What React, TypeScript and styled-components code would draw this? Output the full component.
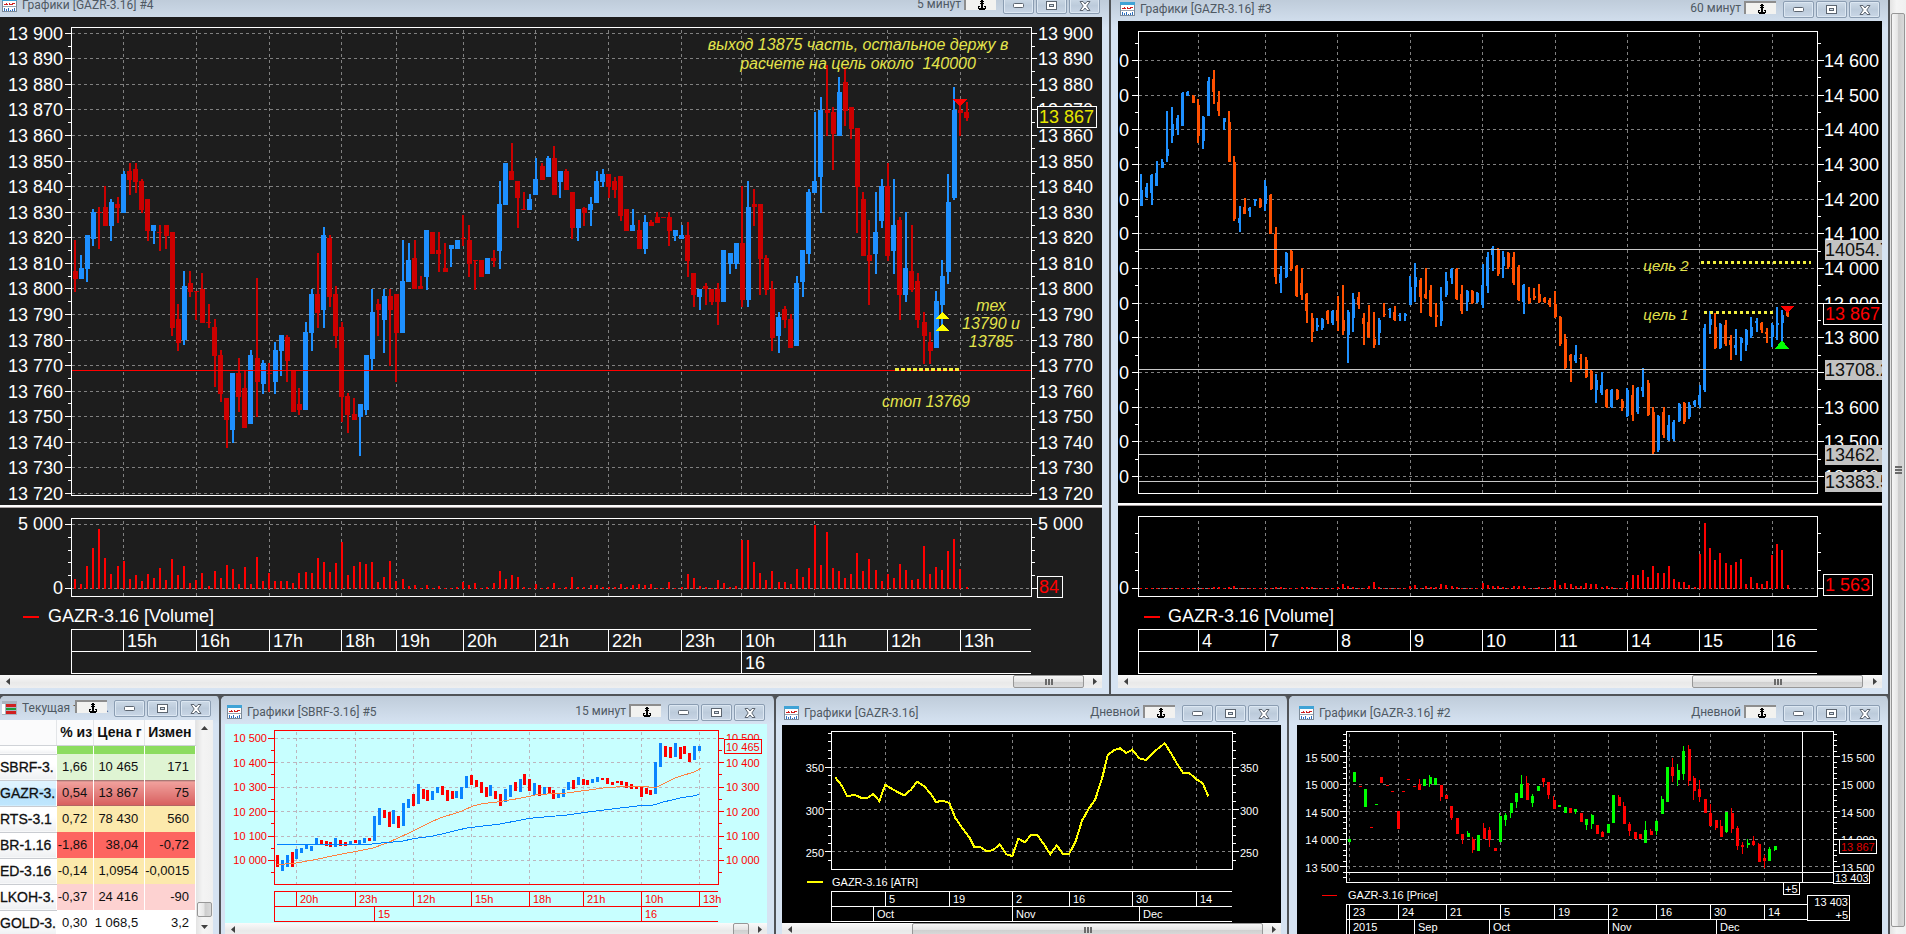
import React, { useLayoutEffect, useRef, useState } from 'react';
import styled, { createGlobalStyle, css } from 'styled-components';

const GlobalStyle = createGlobalStyle`
  *, *::before, *::after { box-sizing: border-box; }
  html, body, #root { height: 100%; }
  body { margin: 0; overflow: hidden; background: #45484c; font-family: 'Liberation Sans', Arial, sans-serif; }
  button { font: inherit; margin: 0; padding: 0; }
`;

const FRAME = '#d6e3f2';
const EDGE = '#505357';

/* ---------- desktop and windows ---------- */

const Desktop = styled.main`
  display: flex;
  height: 100vh;
  overflow: hidden;
`;

const WindowRows = styled.div`
  flex: 1;
  min-width: 0;
  display: flex;
  flex-direction: column;
`;

const WindowRow = styled.div<{ $columns: string; $grow?: boolean }>`
  display: grid;
  grid-template-columns: ${(p) => p.$columns};
  ${(p) => p.$grow && css`flex: 1; min-height: 0;`}
  background: ${EDGE};
`;

const Frame = styled.section<{ $left: number; $right: number; $last?: boolean }>`
  display: flex;
  flex-direction: column;
  min-width: 0;
  overflow: hidden;
  background: ${FRAME};
  padding: 0 ${(p) => p.$right}px ${(p) => (p.$last ? 0 : 6)}px ${(p) => p.$left}px;
  border-right: 2px solid ${EDGE};
  border-bottom: ${(p) => (p.$last ? 0 : 2)}px solid ${EDGE};
  border-radius: ${(p) => (p.$last ? '5px 5px 0 0' : '0')};
  background-image: linear-gradient(#bfccda 0, ${FRAME} 28px);
`;

const TitleBar = styled.header<{ $height: number }>`
  flex: none;
  height: ${(p) => p.$height}px;
  display: flex;
  align-items: flex-end;
  gap: 2px;
  padding: 0 2px 3px 2px;
  color: #4f5963;
  font-family: Roboto, 'Open Sans', sans-serif;
  font-size: 12px;
  line-height: 17px;
  white-space: nowrap;
`;

const TitleIcon = styled.svg`
  flex: none;
  width: 15px;
  height: 14px;
  margin: 0 3px 2px 0;
`;

const TitleText = styled.h2`
  flex: 1;
  min-width: 0;
  margin: 0;
  font: inherit;
  overflow: hidden;
`;

const Period = styled.span`
  padding-bottom: 1px;
`;

const AnchorButton = styled.button<{ $overlap?: boolean }>`
  flex: none;
  width: 32px;
  height: 13px;
  margin: 0 5px 4px ${(p) => (p.$overlap ? -36 : 1)}px;
  z-index: 1;
  display: flex;
  justify-content: center;
  align-items: center;
  border: 0;
  border-top: 2px solid #8d8d8d;
  border-left: 2px solid #8d8d8d;
  background: #f2f2f0;
`;

const CaptionButton = styled.button`
  flex: none;
  width: 31px;
  height: 17px;
  display: flex;
  justify-content: center;
  align-items: center;
  border: 1px solid #8b9db2;
  border-radius: 2px;
  background: linear-gradient(#cddae7, #bccbdb 50%, #c9d6e6);
  box-shadow: inset 0 0 0 1px #dce7f2;
`;

const Client = styled.div`
  flex: none;
  min-width: 0;
  overflow: hidden;
`;

function ChartIcon() {
  return (
    <TitleIcon viewBox="0 0 15 14" shapeRendering="crispEdges" aria-hidden="true">
      <rect width="15" height="14" fill="#7c8a98" />
      <rect x="1" y="3" width="13" height="10" fill="#fff" />
      <rect width="15" height="3" fill="#3fa3d6" />
      <path d="M2 6h2v-1h1v1h2v-1h1v1h2v-1h3v1h-2v1h-4v-1h-1v1h-4z" fill="#d02020" />
      <rect x="1" y="8" width="13" height="1" fill="#9aa5b0" />
      <path d="M2 10h1v3h-1zM4 11h1v2h-1zM6 10h1v3h-1zM8 12h1v1h-1zM10 11h1v2h-1zM12 10h1v3h-1z" fill="#2d6fc0" />
    </TitleIcon>
  );
}

function TableIcon() {
  return (
    <TitleIcon viewBox="0 0 15 14" shapeRendering="crispEdges" aria-hidden="true">
      <rect width="15" height="14" fill="#a9b4bf" />
      <rect y="3" width="3" height="10" fill="#fff" />
      <rect x="4" y="3" width="10" height="3" fill="#d02020" />
      <rect x="4" y="7" width="10" height="2" fill="#1f9a3a" />
      <rect x="4" y="10" width="10" height="3" fill="#d02020" />
    </TitleIcon>
  );
}

function AnchorGlyph() {
  return (
    <svg width="9" height="10" viewBox="0 0 9 10" aria-hidden="true" shapeRendering="crispEdges">
      <path d="M4 0h2v1h1v1h-1v1h1v1h-1v4h2v-1h-1v-1h2v3h-1v1h-6v-1h-1v-3h2v1h-1v1h2v-4h-1v-1h1v-1h-1v-1h1z" fill="#000" />
    </svg>
  );
}

function Captions() {
  return (
    <>
      <CaptionButton aria-label="Свернуть">
        <svg width="11" height="5" viewBox="0 0 11 5"><rect x="0.5" y="0.5" width="10" height="4" rx="1" fill="#fff" stroke="#5c6570" /></svg>
      </CaptionButton>
      <CaptionButton aria-label="Развернуть">
        <svg width="11" height="9" viewBox="0 0 11 9" shapeRendering="crispEdges">
          <rect x="0.5" y="0.5" width="10" height="8" fill="#fff" stroke="#5c6570" />
          <rect x="3.5" y="3.5" width="4" height="2" fill="#d5dfea" stroke="#5c6570" />
        </svg>
      </CaptionButton>
      <CaptionButton aria-label="Закрыть">
        <svg width="12" height="10" viewBox="0 0 12 10">
          <path d="M1 .5h3l2 2.500 2-2.500h3L7.800 5 11 9.500H8L6 7 4 9.500H1L4.200 5z" fill="#fff" stroke="#5c6570" />
        </svg>
      </CaptionButton>
    </>
  );
}

interface WinProps {
  title: string;
  period?: string;
  titleHeight: number;
  left: number;
  right: number;
  last?: boolean;
  table?: boolean;
  children: React.ReactNode;
}

function Win({ title, period, titleHeight, left, right, last, table, children }: WinProps) {
  return (
    <Frame $left={left} $right={right} $last={last}>
      <TitleBar $height={titleHeight}>
        {table ? <TableIcon /> : <ChartIcon />}
        <TitleText>{title}</TitleText>
        {period && <Period>{period}</Period>}
        <AnchorButton $overlap={table} aria-label="Закрепить"><AnchorGlyph /></AnchorButton>
        <Captions />
      </TitleBar>
      {children}
    </Frame>
  );
}

/* ---------- scroll bars ---------- */

const HBar = styled.div`
  flex: none;
  height: 13px;
  display: flex;
  align-items: center;
  background: linear-gradient(#fafafa, #e9e9e9 60%, #efefef);
`;

const HTrack = styled.div<{ $before: number; $thumb: number; $after: number }>`
  flex: 1;
  height: 100%;
  display: grid;
  grid-template-columns: ${(p) => `${p.$before}fr ${p.$thumb}fr ${p.$after}fr`};
`;

const HThumb = styled.div`
  grid-column: 2;
  min-width: 0;
  display: flex;
  justify-content: center;
  align-items: center;
  gap: 1px;
  overflow: hidden;
  border: 1px solid #979797;
  border-radius: 2px;
  background: linear-gradient(#f6f6f6, #e4e4e4 50%, #cfcfcf 52%, #dadada);
`;

const Grip = styled.i<{ $vertical?: boolean }>`
  flex: none;
  width: ${(p) => (p.$vertical ? 7 : 2)}px;
  height: ${(p) => (p.$vertical ? 2 : 6)}px;
  background: #6b6b6b;
`;

const ArrowButton = styled.button<{ $w: number; $h: number }>`
  flex: none;
  width: ${(p) => p.$w}px;
  height: ${(p) => p.$h}px;
  display: flex;
  align-items: center;
  justify-content: center;
  border: 0;
  background: transparent;
`;

function Arrow({ d, label, w, h }: { d: string; label: string; w: number; h: number }) {
  return (
    <ArrowButton $w={w} $h={h} aria-label={label}>
      <svg width="7" height="7" viewBox="0 0 7 7"><path d={d} fill="#404040" /></svg>
    </ArrowButton>
  );
}

const LEFT = 'M5 0v7L1 3.500z';
const RIGHT = 'M2 0v7l4-3.500z';
const UP = 'M0 5h7L3.500 1z';
const DOWN = 'M0 2h7L3.500 6z';

function HScroll({ before, thumb, after, grip = true }: { before: number; thumb: number; after: number; grip?: boolean }) {
  return (
    <HBar>
      <Arrow d={LEFT} label="Влево" w={16} h={13} />
      <HTrack $before={before} $thumb={thumb} $after={after}>
        <HThumb>{grip && <><Grip /><Grip /><Grip /></>}</HThumb>
      </HTrack>
      <Arrow d={RIGHT} label="Вправо" w={16} h={13} />
    </HBar>
  );
}

const VBar = styled.div<{ $width: number }>`
  flex: none;
  width: ${(p) => p.$width}px;
  display: flex;
  flex-direction: column;
  align-items: stretch;
  background: linear-gradient(90deg, #e3e3e3, #f4f4f4 40%, #f0f0f0);
`;

const VThumb = styled.div<{ $grow?: boolean }>`
  ${(p) => (p.$grow ? 'flex: 1;' : 'height: 15px;')}
  margin: 0 1px;
  display: flex;
  flex-direction: column;
  align-items: center;
  justify-content: center;
  gap: 1px;
  border: 1px solid #979797;
  border-radius: 2px;
  background: linear-gradient(90deg, #f6f6f6, #e6e6e6 45%, #cdcdcd 55%, #d9d9d9);
`;

const Spacer = styled.div<{ $h?: number }>`
  ${(p) => (p.$h ? `flex: none; height: ${p.$h}px;` : 'flex: 1;')}
`;

/* ---------- charts ---------- */

const Svg = styled.svg`
  display: block;
  shape-rendering: crispEdges;
`;

const SvgText = styled.text<{ $size: number; $italic?: boolean }>`
  font-family: 'Liberation Sans', Arial, sans-serif;
  font-size: ${(p) => p.$size}px;
  font-style: ${(p) => (p.$italic ? 'italic' : 'normal')};
  white-space: pre;
`;

interface TextProps {
  x: number;
  y: number;
  size: number;
  fill: string;
  end?: boolean;
  middle?: boolean;
  italic?: boolean;
  children: React.ReactNode;
}

/* y is the middle of the digits */
function T({ x, y, size, fill, end, middle, italic, children }: TextProps) {
  return (
    <SvgText
      x={Math.round(x)}
      y={Math.round(y + size * 0.36)}
      fill={fill}
      textAnchor={end ? 'end' : middle ? 'middle' : 'start'}
      $size={size}
      $italic={italic}
    >
      {children}
    </SvgText>
  );
}

interface H { x1: number; x2: number; y: number; color: string; dash?: string; w?: number }
function HL({ x1, x2, y, color, dash, w = 1 }: H) {
  const yy = Math.floor(y) + (w % 2 ? 0.5 : 0);
  return <line x1={x1} x2={x2} y1={yy} y2={yy} stroke={color} strokeWidth={w} strokeDasharray={dash} />;
}
interface V { x: number; y1: number; y2: number; color: string; dash?: string }
function VL({ x, y1, y2, color, dash }: V) {
  const xx = Math.floor(x) + 0.5;
  return <line x1={xx} x2={xx} y1={y1} y2={y2} stroke={color} strokeDasharray={dash} />;
}

function Box({ x1, x2, y1, y2, color, fill = 'none' }: { x1: number; x2: number; y1: number; y2: number; color: string; fill?: string }) {
  const a = Math.floor(x1);
  const b = Math.floor(y1);
  return <rect x={a + 0.5} y={b + 0.5} width={Math.floor(x2) - a} height={Math.floor(y2) - b} stroke={color} fill={fill} />;
}

type Fx = (x: number) => number;

interface CanvasProps {
  x: number;
  y: number;
  width: number;
  height: number;
  plot: [number, number];
  bg: string;
  label: string;
  children: (fx: Fx) => React.ReactNode;
}

/* The axes keep their width; only the plot stretches with the window. */
function Canvas({ x, y, width, height, plot, bg, label, children }: CanvasProps) {
  const ref = useRef<HTMLDivElement>(null);
  const [w, setW] = useState(width);
  useLayoutEffect(() => {
    const el = ref.current;
    if (!el) return;
    const read = () => setW(Math.max(200, el.clientWidth));
    read();
    const ro = new ResizeObserver(read);
    ro.observe(el);
    return () => ro.disconnect();
  }, []);
  const [l, r] = plot;
  const extra = w - width;
  const fx: Fx = (v) => (v <= l ? v : v >= r ? v + extra : l + ((v - l) * (r - l + extra)) / (r - l));
  return (
    <Client ref={ref}>
      <Svg width={w} height={height} viewBox={`${x} ${y} ${w} ${height}`} role="img" aria-label={label}>
        <rect x={x} y={y} width={w} height={height} fill={bg} />
        {children(fx)}
      </Svg>
    </Client>
  );
}

/* Bars are stored as colour + high, open/close top, bottom, low in thirds of a pixel. */
type Bar = { c: string; v: number[] };
const parse = (s: string): Bar[] =>
  s.trim().split(/\s+/).map((t) => {
    const n = t.slice(1).split(',').map(Number);
    return { c: t[0], v: n.length === 2 ? [n[0], n[0], n[1], n[1]] : n };
  });

interface BarsProps {
  data: Bar[];
  fx: Fx;
  start: number;
  step: number;
  base?: number;
  colors: Record<string, string>;
  wick: number;
  body: number;
}
function Bars({ data, fx, start, step, base = 0, colors, wick, body }: BarsProps) {
  return (
    <>
      {data.map(({ c, v: [h, t, b, l] }, i) => {
        const cx = fx(start + step * i);
        const y = (n: number) => Math.round(base + n / 3);
        return (
          <g key={i} fill={colors[c]}>
            {l > h && (h < t || l > b) && <rect x={Math.round(cx - 1)} y={y(h)} width={wick} height={Math.max(1, y(l) - y(h))} />}
            <rect x={Math.round(cx - body / 2)} y={y(t)} width={body} height={Math.max(1, y(b) - y(t))} />
          </g>
        );
      })}
    </>
  );
}

function Volume({ tops, fx, start, step }: { tops: number[]; fx: Fx; start: number; step: number }) {
  return (
    <g fill="#ff0000">
      {tops.map((t, i) => {
        const y = Math.round(490 + t / 3);
        return <rect key={i} x={Math.round(fx(start + step * i) - 1)} y={y} width="2" height={589 - y} />;
      })}
    </g>
  );
}

const GAZR5 = parse(`
r720,813,836,876 b765,804,836,836 b705,705,807,845 b627,636,716,738 r622,636,640,746 r558,622,677,677 b598,606,678,722 r591,612,624,668
b514,522,638,638 r489,514,540,584 r489,507,545,578 r537,543,629,638 r598,598,692,722 b675,675,692,731 r675,697,700,752 r676,676,707,746
r697,697,983,1007 r912,957,1028,1052 b813,858,1021,1036 r813,849,876,890 r873,873,876,960 r819,867,968,968 r912,966,969,983 r958,981,1067,1160
r1050,1065,1181,1205 r1194,1194,1259,1343 b1119,1119,1289,1328 r1074,1119,1190,1235 r1113,1164,1283,1283 b1050,1065,1273,1273 r833,1074,1145,1250
b1080,1089,1151,1181 r1089,1119,1123,1175 b1027,1050,1145,1181 b1005,1005,1052,1127 r1005,1012,1083,1145 r1112,1112,1235,1235 r1164,1212,1229,1244
b966,996,1229,1229 b867,882,998,1052 r759,882,938,983 b681,705,929,983 r705,714,890,920 r858,882,1007,1043 r966,981,1190,1266 r1180,1188,1244,1298
r1194,1242,1259,1259 b1212,1212,1250,1367 b1065,1065,1229,1244 b867,936,1076,1112 r897,912,929,1007 b867,888,960,1058 r867,888,929,1097
r882,882,998,1145 b720,843,998,998 b730,780,845,845 r720,774,867,867 r828,858,867,867 b690,690,831,870 r697,697,762,762 r697,750,762,815
r730,804,816,816 b735,735,747,801 b720,720,747,747 r645,714,717,738 r675,720,792,831 r780,780,783,870 r780,780,831,831 b774,774,822,822
r750,774,783,800 b543,612,752,807 b489,489,614,614 r430,514,540,540 r543,543,593,684 r576,627,630,630 b582,597,629,629 b474,537,584,584
r489,498,540,540 b468,474,530,530 r437,474,584,584 b513,513,545,593 r508,513,569,569 r576,576,684,716 b627,627,684,722 r621,625,640,677
b591,612,629,677 b513,543,608,608 b507,522,545,560 r522,522,560,593 r530,543,570,593 r528,528,648,662 r627,627,692,692 b627,675,692,692
r660,690,746,746 b645,666,746,762 r660,666,677,677 r636,651,668,668 r651,651,654,654 r636,651,692,738 b690,690,707,722 b675,705,716,716
r666,705,783,830 r819,819,884,920 b867,867,890,929 r850,858,867,914 r868,868,906,914 r850,868,905,975 b750,750,905,905 b759,759,791,822
b730,730,791,806 r558,730,899,920 b543,621,899,920 r567,612,622,677 r612,612,777,884 r766,774,870,884 r843,867,1013,1052 b937,951,1007,1058
r918,927,960,983 r943,957,1043,1043 b828,849,1037,1037 b750,750,845,890 b567,576,762,791 b336,543,578,578 b291,330,530,638 r195,330,339,407
r321,336,402,510 b231,276,407,407 r200,246,332,377 r321,321,387,417 r384,384,560,699 r576,597,767,767 r660,765,782,914 b576,697,762,822
b537,558,662,684 r489,558,767,783 b537,675,752,822 r651,660,885,960 b636,804,885,905 r675,813,870,876 r819,843,960,983 r936,966,1007,1091
r996,1025,1052,1091 b873,903,1043,1043 b780,828,914,975 b522,606,816,851 b261,330,593,599 r315,330,339,407 r306,336,353,362`);

const VOL5 = [
  267, 282, 228, 174, 117, 204, 252, 228, 213, 267, 255, 273, 252, 264, 234, 270, 207, 255, 228, 279, 270, 249, 288, 243, 264, 225, 237, 282, 231, 282,
  201, 273, 249, 273, 273, 273, 279, 249, 246, 249, 204, 216, 246, 219, 156, 255, 228, 216, 222, 216, 276, 261, 213, 273, 267, 288, 285, 293, 285, 293,
  288, 293, 293, 291, 276, 285, 279, 293, 291, 279, 243, 267, 255, 261, 291, 293, 282, 293, 291, 279, 293, 291, 261, 291, 291, 285, 285, 291, 291, 291,
  282, 291, 285, 282, 285, 282, 293, 293, 276, 293, 291, 252, 264, 288, 291, 293, 270, 279, 291, 288, 150, 150, 216, 249, 270, 243, 276, 276, 282, 237,
  261, 234, 105, 225, 126, 234, 243, 264, 252, 189, 243, 207, 240, 273, 252, 264, 222, 240, 270, 267, 168, 252, 231, 240, 183, 147, 237, 291,
];

const GAZR60 = parse(`
b522,570,618,618 b548,560,592,594 b522,525,580,615 b483,520,557,557 b477,485,503,503 b333,447,467,486 b321,372,408,429 b345,355,388,405
b276,280,377,378 b273,275,287,287 r285,288,308,308 r297,315,408,430 b348,350,423,446 b231,244,347,348 r210,237,275,312 r273,306,333,348
b353,355,365,390 r333,366,486,486 r468,486,657,663 b618,654,670,696 r594,621,641,641 b621,625,632,651 b597,598,604,618 r594,597,620,624
b540,558,612,633 r582,584,701,701 r681,702,830,851 b798,822,850,879 b756,758,832,833 r749,752,808,813 r795,798,888,890 r804,849,885,899
r879,881,933,968 r939,954,996,1025 b954,975,980,992 b954,957,985,990 r930,932,960,972 b930,933,970,974 r888,930,963,992 r855,960,994,1005
b930,935,1004,1089 b879,898,955,995 r876,892,915,927 r939,953,972,1034 r915,965,1010,1014 r936,1017,1035,1043 b954,960,1000,1034
r909,942,946,950 b924,927,930,953 r918,935,960,962 b939,945,948,962 b939,942,948,962 b828,861,914,914 b789,831,861,906 r834,840,891,938
r804,882,893,896 r855,870,947,950 r909,945,950,980 b861,903,963,977 b816,843,885,890 b805,807,835,851 r804,807,897,899 r855,882,932,941
b870,872,905,932 r870,872,908,911 b876,880,906,909 b792,856,915,923 b756,770,857,878 b738,745,765,812 r744,746,822,827 b753,770,797,833
r756,760,800,806 r756,770,850,854 r795,800,900,902 b852,855,907,941 r861,893,908,911 r863,888,895,899 r852,882,905,908 r891,895,906,909
r895,899,914,920 r873,912,952,954 r948,950,1033,1037 r1002,1018,1105,1108 r1062,1065,1082,1145 b1035,1065,1083,1089 r1062,1073,1077,1108
r1071,1080,1130,1133 r1110,1112,1168,1170 b1122,1140,1170,1209 b1116,1155,1180,1185 r1167,1170,1220,1224 b1167,1170,1220,1224
r1167,1170,1197,1200 r1197,1203,1225,1232 b1164,1170,1247,1251 r1155,1185,1245,1263 b1161,1165,1235,1242 b1104,1162,1172,1191
r1140,1150,1245,1248 r1221,1235,1355,1362 b1245,1248,1350,1356 r1221,1235,1305,1314 b1245,1275,1320,1323 b1260,1265,1318,1323
b1209,1212,1262,1266 r1206,1210,1265,1272 b1206,1215,1250,1257 b1200,1203,1216,1221 b1155,1185,1215,1224 b972,985,1170,1175
b933,957,975,1002 r939,980,1043,1047 b969,972,1045,1047 r960,975,1032,1038 r1005,1020,1035,1080 b987,1035,1043,1064 b1011,1013,1030,1083
b987,990,1035,1053 b951,980,1008,1014 b954,963,970,995 r966,970,990,999 r984,995,1002,1028 b969,975,1010,1041 b921,970,975,1020
b930,945,970,1030 r930,936,948,951`);

const VOL60: number[] = Array.from({ length: 94 }, () => 294);
Object.entries({
  14: 291, 15: 291, 17: 291, 18: 288, 26: 291, 27: 291, 31: 291, 32: 291, 33: 291, 38: 291, 39: 282, 40: 288, 41: 291, 44: 288, 45: 276, 46: 291,
  52: 288, 53: 285, 55: 288, 56: 291, 57: 291, 58: 282, 59: 285, 60: 288, 61: 291, 66: 279, 67: 285, 68: 288, 69: 288, 70: 291, 72: 288, 73: 288,
  74: 288, 77: 291, 79: 291, 80: 270, 81: 285, 82: 279, 83: 282, 84: 288, 85: 288, 86: 279, 87: 282, 88: 282, 89: 291, 90: 288, 91: 291,
}).forEach(([i, v]) => { VOL60[Number(i)] = v; });
VOL60.push(276, 255, 255, 240, 261, 228, 249, 249, 228, 267, 276, 276, 285, 291, 192, 99, 174, 210, 189, 219, 225, 216, 207, 282, 261, 279, 282, 273, 195, 162, 180, 285);

const SBRF = parse(`
r495,530 b510,543 b495,531 r486,530 b477,508 b474,488 b465,476 b468,482 b444,464 r450,464 r453,468 r456,470 b444,470 r450,467 r456,468 b453,464
r450,460 b450,462 b444,458 r444,452 b378,452 b354,405 r360,384 r366,410 b360,402 r378,413 b339,407 b327,354 r312,347 b282,343 r297,327 r300,333
b303,331 b290,310 r288,314 r300,332 r303,328 b304,325 b290,327 b258,293 r255,285 r270,290 r276,308 r290,320 b285,318 r303,328 r311,347 b297,335
b285,322 r276,304 b268,306 r252,285 r267,304 b279,314 r285,317 b291,314 r291,310 r300,326 b311,324 b297,321 b276,300 r270,298 b261,285 r267,284
r270,285 b267,279 b261,276 r263,270 r264,283 r275,286 r273,280 r274,285 r276,294 r282,296 r290,297 r290,321 r294,312 r300,315 b216,312 b159,230
r168,200 r171,204 b159,200 r171,208 r168,192 r189,217 b168,210 b168,182`);

const DAILY = parse(`
g447,456 g246,276 r288,291 g297,350 r411,414 g342,346 r261,278 r286,289 r303,306 r364,417 r303,306 r267,270 r289,292 r267,282,300,300 g267,287
g255,262,283,290 g264,285 r285,285,321,333 r315,327 r348,348,384,390 r384,432 r432,432,448,462 g422,430,441,441 r441,447,479,489 g435,482
r399,414,447,447 r411,420,450,470 r474,483 g369,378,456,456 g369,375,390,408 g339,339,369,384 g309,309,336,354 g255,282,324,324 r258,279,329,329
g312,318,339,352 g288,303 r264,264,275,291 r276,276,315,327 r318,330,357,357 g345,351 g351,369 r354,370 g357,357,366,372 r369,395 g387,387,405,420
g372,375,402,417 r405,432 r423,427,441,441 g402,429 g315,399 r315,321,348,348 r336,348,402,402 r396,401,423,438 r426,447 r433,448 g393,420,459,459
r417,424,435,435 g390,393,423,435 g318,327,372,372 g231,336 r204,231,258,276 g222,240,270,288 g168,183,252,270 r165,177,273,288 r258,264,303,330
r270,297,321,335 r327,369 r342,369,408,408 r390,390,413,420 r390,408,441,441 g366,366,426,430 r354,369,417,430 r408,414,468,480 r456,464,471,492
g447,459,465,474 r438,454,465,468 r459,462,516,516 r495,504,513,534 g471,477,513,513 g468,468,480,483`);

const SMA = '832,524 889,519 950,508 1020,493 1080,482 1120,474 1170,455 1200,441 1240,423 1280,402 1320,384 1380,365 1420,348 1446,341 1490,336 1560,325 1610,314 1670,310 1700,309 1760,301 1810,294 1860,290 1920,290 1970,292 1990,281 2030,262 2085,245 2104,234';
const LMA = '832,462 900,462 920,465 960,464 1110,463 1160,457 1200,455 1240,446 1300,438 1400,414 1500,402 1590,385 1700,375 1780,364 1860,354 1920,347 1960,345 1990,336 2040,324 2085,317 2098,313';
const ATR = '196,262 216,288 231,318 240,317 255,315 273,323 292,324 310,312 328,333 346,284 365,296 384,307 403,316 422,300 441,275 462,288 482,311 498,336 518,332 538,339 556,384 577,414 598,442 612,470 630,471 651,484 670,480 689,463 709,493 727,498 745,446 765,457 783,434 802,435 822,463 841,493 860,466 879,492 898,491 917,453 936,392 957,355 975,330 996,266 1013,196 1031,181 1050,175 1069,189 1087,179 1108,205 1127,210 1146,191 1165,175 1184,160 1204,191 1222,223 1239,248 1257,248 1279,268 1298,280 1315,319';

function Poly({ pts, fx, ox, color, w }: { pts: string; fx: Fx; ox: number; color: string; w: number }) {
  const p = pts.split(' ').map((s) => {
    const [a, b] = s.split(',').map(Number);
    return `${fx(ox + a / 3).toFixed(1)},${(690 + b / 3).toFixed(1)}`;
  });
  return <polyline points={p.join(' ')} fill="none" stroke={color} strokeWidth={w} />;
}

type Mark = [number, string];

interface TimeAxisProps {
  fx: Fx;
  x1: number;
  x2: number;
  rows: [number, number, number];
  top: Mark[];
  bottom: Mark[];
  color: string;
  size: number;
}
function TimeAxis({ fx, x1, x2, rows, top, bottom, color, size }: TimeAxisProps) {
  const row = (marks: Mark[], a: number, b: number) =>
    marks.map(([x, s]) => (
      <g key={s + x}>
        <VL x={fx(x)} y1={a} y2={b} color={color} />
        <T x={Math.floor(fx(x)) + 4} y={(a + b) / 2 + 0.5} size={size} fill={color}>{s}</T>
      </g>
    ));
  return (
    <>
      {rows.map((y) => <HL key={y} x1={x1} x2={fx(x2)} y={y} color={color} />)}
      <VL x={x1} y1={rows[0]} y2={rows[2]} color={color} />
      {row(top, rows[0], rows[1])}
      {row(bottom, rows[1], rows[2])}
    </>
  );
}

const GRID = '#808080';
const DASH = '3 3';
const W = '#ffffff';
const NOTE = '#e4e44c';
const SMALL = 11;
const range = (n: number) => Array.from({ length: n }, (_, i) => i);
const price = (p: number) => `${Math.floor(p / 1000)} ${String(p % 1000).padStart(3, '0')}`;

const HOURS5: Mark[] = [
  [123.6, '15h'], [196.4, '16h'], [269.3, '17h'], [341.6, '18h'], [396.6, '19h'], [463.4, '20h'], [535.5, '21h'],
  [608.4, '22h'], [681.5, '23h'], [741.5, '10h'], [814.5, '11h'], [887.5, '12h'], [960.5, '13h'],
];

function Chart5() {
  return (
    <Canvas x={0} y={17} width={1102} height={658} plot={[72, 1031]} bg="#1d1d1d" label="GAZR-3.16, 5 минут">
      {(fx) => {
        const r = fx(1031);
        return (
          <>
            {range(19).map((i) => {
              const y = 33.3 + 25.56 * i;
              const s = price(13900 - 10 * i);
              return (
                <g key={i}>
                  <HL x1={72} x2={r} y={y} color={GRID} dash={DASH} />
                  <HL x1={65} x2={71} y={y} color={W} />
                  <HL x1={r + 1} x2={r + 6} y={y} color={W} />
                  {i < 18 && <HL x1={68} x2={71} y={y + 12.800} color={W} />}
                  {i < 18 && <HL x1={r + 1} x2={r + 4} y={y + 12.800} color={W} />}
                  <T x={63} y={y} size={18} fill={W} end>{s}</T>
                  <T x={r + 7} y={y} size={18} fill={W}>{s}</T>
                </g>
              );
            })}
            {HOURS5.map(([x]) => (
              <g key={x}>
                <VL x={fx(x)} y1={30} y2={495} color={GRID} dash={DASH} />
                <VL x={fx(x)} y1={521} y2={596} color={GRID} dash={DASH} />
              </g>
            ))}
            <Bars data={GAZR5} fx={fx} start={75.1} step={6.064} colors={{ r: '#cc0000', b: '#1e90ff' }} wick={2} body={5} />
            <HL x1={72} x2={r} y={370} color="#ff0000" />
            <Box x1={71} x2={r} y1={27} y2={495} color={W} />
            <rect x={0} y={505} width={fx(1102)} height={2} fill="#fff" />
            <rect x={0} y={507} width={fx(1102)} height={1} fill="#a8a0a0" />

            <HL x1={72} x2={r} y={524} color={GRID} dash={DASH} />
            <HL x1={72} x2={r} y={588} color={GRID} dash={DASH} />
            {[524, 588].map((y) => (
              <g key={y}>
                <HL x1={65} x2={71} y={y} color={W} />
                <HL x1={r + 1} x2={r + 6} y={y} color={W} />
              </g>
            ))}
            {[537, 550, 562, 575].map((y) => (
              <g key={y}>
                <HL x1={68} x2={71} y={y} color={W} />
                <HL x1={r + 1} x2={r + 4} y={y} color={W} />
              </g>
            ))}
            <T x={63} y={524} size={18} fill={W} end>5 000</T>
            <T x={63} y={588} size={18} fill={W} end>0</T>
            <T x={r + 7} y={524} size={18} fill={W}>5 000</T>
            <Volume tops={VOL5} fx={fx} start={75.1} step={6.064} />
            <Box x1={71} x2={r} y1={518} y2={596} color={W} />

            <Box x1={r + 6} x2={r + 65} y1={106} y2={127} color={W} fill="#1d1d1d" />
            <T x={r + 8} y={117} size={18} fill="#e6e600">13 867</T>
            <Box x1={r + 6} x2={r + 31} y1={576} y2={597} color={W} fill="#1d1d1d" />
            <T x={r + 8} y={587} size={18} fill="#ff0000">84</T>

            <HL x1={23} x2={39} y={617} w={2} color="#ff0000" />
            <T x={48} y={616} size={18} fill={W}>GAZR-3.16 [Volume]</T>
            <TimeAxis fx={fx} x1={71} x2={1031} rows={[629, 651, 673]} top={HOURS5} bottom={[[741.5, '16']]} color={W} size={18} />

            <line x1={fx(895)} x2={fx(960)} y1={369.5} y2={369.5} stroke="#f0ee3c" strokeWidth={3} strokeDasharray="4 2" />
            <path d={`M${fx(942)} 312l7 7h-14zM${fx(942)} 324l7 7h-14z`} fill="#ffff00" />
            <path d={`M${fx(960)} 107l-7-8h14z`} fill="#ff0000" />
            <T x={fx(858)} y={44} size={16} fill={NOTE} italic middle>выход 13875 часть, остальное держу в</T>
            <T x={fx(858)} y={63} size={16} fill={NOTE} italic middle>{'расчете на цель около  140000'}</T>
            <T x={fx(991)} y={305} size={16} fill={NOTE} italic middle>тех</T>
            <T x={fx(991)} y={323} size={16} fill={NOTE} italic middle>13790 и</T>
            <T x={fx(991)} y={341} size={16} fill={NOTE} italic middle>13785</T>
            <T x={fx(926)} y={401} size={16} fill={NOTE} italic middle>стоп 13769</T>
          </>
        );
      }}
    </Canvas>
  );
}

const DAYS60: Mark[] = [
  [1198.4, '4'], [1265.4, '7'], [1337.4, '8'], [1410.4, '9'], [1482.4, '10'], [1555.4, '11'], [1627.4, '14'], [1699.4, '15'], [1772.4, '16'],
];

function Chart60() {
  return (
    <Canvas x={1118} y={21} width={764} height={654} plot={[1139, 1817]} bg="#000000" label="GAZR-3.16, 60 минут">
      {(fx) => {
        const r = fx(1817);
        return (
          <>
            {range(13).map((i) => {
              const y = 60.4 + 34.67 * i;
              const p = 14600 - 100 * i;
              return (
                <g key={i}>
                  <HL x1={1139} x2={r} y={y} color={GRID} dash={DASH} />
                  <HL x1={1132} x2={1138} y={y} color={W} />
                  <HL x1={r + 1} x2={r + 7} y={y} color={W} />
                  <HL x1={1135} x2={1138} y={y - 17.300} color={W} />
                  <HL x1={r + 1} x2={r + 4} y={y - 17.300} color={W} />
                  <T x={1129} y={y} size={18} fill={W} end>0</T>
                  {p !== 13700 && <T x={r + 7} y={y} size={18} fill={W}>{price(p)}</T>}
                </g>
              );
            })}
            {DAYS60.map(([x]) => (
              <g key={x}>
                <VL x={fx(x)} y1={34} y2={493} color={GRID} dash={DASH} />
                <VL x={fx(x)} y1={521} y2={596} color={GRID} dash={DASH} />
              </g>
            ))}
            <Bars data={GAZR60} fx={fx} start={1141.4} step={5.17} colors={{ r: '#ff5000', b: '#1e90ff' }} wick={2} body={3} />
            {[249, 369, 454, 481].map((y) => <HL key={y} x1={1139} x2={r} y={y} color="#c8c8c8" />)}
            <Box x1={1138} x2={r} y1={31} y2={493} color={W} />
            <rect x={1118} y={503} width={fx(1882) - 1118} height={2} fill="#fff" />
            <rect x={1118} y={505} width={fx(1882) - 1118} height={1} fill="#a8a0a0" />

            <HL x1={1139} x2={r} y={588} color={GRID} dash={DASH} />
            <HL x1={1132} x2={1138} y={588} color={W} />
            <HL x1={r + 1} x2={r + 6} y={588} color={W} />
            {[533, 552, 570].map((y) => (
              <g key={y}>
                <HL x1={1135} x2={1138} y={y} color={W} />
                <HL x1={r + 1} x2={r + 4} y={y} color={W} />
              </g>
            ))}
            <T x={1129} y={588} size={18} fill={W} end>0</T>
            <Volume tops={VOL60} fx={fx} start={1141.4} step={5.17} />
            <Box x1={1138} x2={r} y1={516} y2={596} color={W} />

            {([[240, '14054.7'], [360, '13708.2'], [445, '13462.7'], [472, '13383.5']] as Mark[]).map(([y, s]) => (
              <g key={s}>
                <rect x={r + 8} y={y} width={57} height={20} fill="#c3c3c3" />
                <T x={r + 8} y={y + 10} size={18} fill="#101010">{s}</T>
              </g>
            ))}
            <Box x1={r + 6} x2={r + 80} y1={303} y2={324} color={W} fill="#000" />
            <T x={r + 8} y={314} size={18} fill="#ff0000">13 867</T>
            <Box x1={r + 6} x2={r + 55} y1={574} y2={595} color={W} fill="#000" />
            <T x={r + 8} y={585} size={18} fill="#ff0000">1 563</T>

            <HL x1={1144} x2={1160} y={617} w={2} color="#ff0000" />
            <T x={1168} y={616} size={18} fill={W}>GAZR-3.16 [Volume]</T>
            <TimeAxis fx={fx} x1={1138} x2={1817} rows={[629, 651, 673]} top={DAYS60} bottom={[]} color={W} size={18} />

            <line x1={fx(1701)} x2={fx(1811)} y1={262.5} y2={262.5} stroke="#f0ee3c" strokeWidth={3} strokeDasharray="3 3" />
            <line x1={fx(1704)} x2={fx(1774)} y1={312.5} y2={312.5} stroke="#f0ee3c" strokeWidth={3} strokeDasharray="3 3" />
            <path d={`M${fx(1787)} 313l-7-7h14z`} fill="#ff0000" />
            <path d={`M${fx(1782)} 340l7 9h-14z`} fill="#00ff00" />
            <T x={fx(1666)} y={266} size={15} fill={NOTE} italic middle>цель 2</T>
            <T x={fx(1666)} y={315} size={15} fill={NOTE} italic middle>цель 1</T>
          </>
        );
      }}
    </Canvas>
  );
}

const HOURS15: Mark[] = [
  [296.400, '20h'], [355.400, '23h'], [413.400, '12h'], [471.400, '15h'], [529.400, '18h'], [583.400, '21h'], [641.400, '10h'], [699.400, '13h'],
];

function ChartSbrf() {
  const red = '#ff0000';
  return (
    <Canvas x={225} y={724} width={542} height={199} plot={[275, 718]} bg="#c8ffff" label="SBRF-3.16, 15 минут">
      {(fx) => {
        const r = fx(718);
        return (
          <>
            {range(6).map((i) => {
              const y = 738.5 + 24.4 * i;
              const s = price(10500 - 100 * i);
              return (
                <g key={i}>
                  <HL x1={275} x2={r} y={y} color="#bdb5bd" dash={DASH} />
                  <HL x1={268} x2={274} y={y} color={red} />
                  <HL x1={r + 1} x2={r + 6} y={y} color={red} />
                  <HL x1={271} x2={274} y={y + 12} color={red} />
                  <HL x1={r + 1} x2={r + 4} y={y + 12} color={red} />
                  <T x={267} y={y} size={SMALL} fill={red} end>{s}</T>
                  <T x={r + 8} y={y} size={SMALL} fill={red}>{s}</T>
                </g>
              );
            })}
            {HOURS15.map(([x]) => <VL key={x} x={fx(x)} y1={732} y2={884} color="#bdb5bd" dash={DASH} />)}
            <Bars data={SBRF} fx={fx} start={277.5} step={4.85} base={690} colors={{ r: red, b: '#0a84ff' }} wick={2} body={3} />
            <Poly pts={SMA} fx={fx} ox={0} color="#ff8040" w={1} />
            <Poly pts={LMA} fx={fx} ox={0} color="#0080ff" w={1} />
            <Box x1={274} x2={r} y1={730} y2={884} color={red} />
            <Box x1={r + 6} x2={r + 43} y1={739} y2={753} color={red} fill="#c8ffff" />
            <T x={r + 8} y={747} size={SMALL} fill={red}>10 465</T>
            <TimeAxis fx={fx} x1={274} x2={718} rows={[891, 906, 921]} top={HOURS15} bottom={[[374.700, '15'], [641.400, '16']]} color={red} size={SMALL} />
          </>
        );
      }}
    </Canvas>
  );
}

const ATR_DAYS: Mark[] = [[885.4, '5'], [949.4, '19'], [1012.4, '2'], [1069.4, '16'], [1132.4, '30'], [1196.4, '14']];

function ChartAtr() {
  return (
    <Canvas x={782} y={725} width={499} height={198} plot={[832, 1232]} bg="#000000" label="GAZR-3.16 ATR, дневной">
      {(fx) => {
        const r = fx(1232);
        return (
          <>
            {range(16).map((i) => {
              const y = 733.5 + 8.460 * i;
              const major = i % 5 === 4;
              const len = major ? 6 : 3;
              const s = 350 - 50 * ((i - 4) / 5);
              return (
                <g key={i}>
                  <HL x1={831 - len} x2={831} y={y} color={W} />
                  <HL x1={r + 1} x2={r + 1 + len} y={y} color={W} />
                  {major && <HL x1={832} x2={r} y={y} color={GRID} dash={DASH} />}
                  {major && <T x={824} y={y + 1} size={SMALL} fill={W} end>{s}</T>}
                  {major && <T x={r + 8} y={y + 1} size={SMALL} fill={W}>{s}</T>}
                </g>
              );
            })}
            {ATR_DAYS.map(([x]) => <VL key={x} x={fx(x)} y1={734} y2={869} color={GRID} dash={DASH} />)}
            <Box x1={831} x2={r} y1={731} y2={869} color={W} />
            <Poly pts={ATR} fx={fx} ox={770} color="#ffff00" w={2} />
            <HL x1={807} x2={823} y={882} w={2} color="#ffff00" />
            <T x={832} y={882} size={SMALL} fill={W}>GAZR-3.16 [ATR]</T>
            <TimeAxis fx={fx} x1={831} x2={1232} rows={[891, 906, 921]} top={ATR_DAYS} bottom={[[873.4, 'Oct'], [1012.4, 'Nov'], [1139.6, 'Dec']]} color={W} size={SMALL} />
          </>
        );
      }}
    </Canvas>
  );
}

const PRICE_DAYS: Mark[] = [
  [1349.4, '23'], [1398.4, '24'], [1446.4, '21'], [1500.4, '5'], [1554.4, '19'], [1608.4, '2'], [1656.4, '16'], [1710.4, '30'], [1764.4, '14'],
];

function ChartPrice() {
  return (
    <Canvas x={1297} y={725} width={585} height={214} plot={[1348, 1833]} bg="#000000" label="GAZR-3.16 Price, дневной">
      {(fx) => {
        const r = fx(1833);
        return (
          <>
            {range(27).map((i) => {
              const y = 734.7 + 5.5 * i;
              const major = i % 5 === 4 && i < 25;
              const len = major ? 6 : 3;
              const s = price(15500 - 100 * (i - 4));
              return (
                <g key={i}>
                  <HL x1={1346 - len} x2={1346} y={y} color={W} />
                  <HL x1={r + 1} x2={r + 1 + len} y={y} color={W} />
                  {major && <HL x1={1347} x2={r} y={y} color={GRID} dash={DASH} />}
                  {major && <T x={1339} y={y + 1} size={SMALL} fill={W} end>{s}</T>}
                  {major && <T x={r + 8} y={y + 1} size={SMALL} fill={W}>{s}</T>}
                </g>
              );
            })}
            {PRICE_DAYS.map(([x]) => <VL key={x} x={fx(x)} y1={734} y2={882} color={GRID} dash={DASH} />)}
            <Bars data={DAILY} fx={fx} start={1349.5} step={5.39} base={690} colors={{ r: '#ff0000', g: '#00ff00' }} wick={1} body={3} />
            <Box x1={1346} x2={r} y1={731} y2={882} color={W} />
            <HL x1={1347} x2={r} y={872} color={W} />
            <VL x={fx(1802.4)} y1={732} y2={882} color={W} />
            <Box x1={r + 6} x2={r + 43} y1={839} y2={853} color={W} fill="#000" />
            <T x={r + 8} y={847} size={SMALL} fill="#e00000">13 867</T>
            <Box x1={r} x2={r + 36} y1={871} y2={883} color={W} fill="#000" />
            <T x={r + 2} y={878} size={SMALL} fill={W}>13 403</T>
            <Box x1={fx(1783)} x2={fx(1799)} y1={882} y2={894} color={W} fill="#000" />
            <T x={fx(1785)} y={889} size={SMALL} fill={W}>+5</T>
            <HL x1={1322} x2={1337} y={895} color="#ff0000" />
            <T x={1348} y={895} size={SMALL} fill={W}>GAZR-3.16 [Price]</T>
            <TimeAxis
              fx={fx}
              x1={1346}
              x2={1807}
              rows={[904, 919, 934]}
              top={PRICE_DAYS}
              bottom={[[1349.4, '2015'], [1414.4, 'Sep'], [1489.5, 'Oct'], [1608.5, 'Nov'], [1716.7, 'Dec']]}
              color={W}
              size={SMALL}
            />
            <Box x1={fx(1807)} x2={fx(1807) + 42} y1={895} y2={920} color={W} fill="#000" />
            <T x={fx(1807) + 41} y={902} size={SMALL} fill={W} end>13 403</T>
            <T x={fx(1807) + 41} y={915} size={SMALL} fill={W} end>+5</T>
          </>
        );
      }}
    </Canvas>
  );
}

/* ---------- quotes table ---------- */

const QuotesBody = styled.div`
  flex: 1;
  min-height: 0;
  display: flex;
  overflow: hidden;
  background: #fff;
`;

const QuotesPane = styled.div`
  flex: 1;
  min-width: 0;
  overflow: hidden;
`;

const Quotes = styled.table`
  width: 100%;
  border-collapse: collapse;
  table-layout: fixed;
  color: #101010;
`;

const Col = styled.col<{ $w: number }>`
  width: ${(p) => p.$w}%;
`;

const QHead = styled.th`
  height: 25px;
  padding: 0 0 0 3px;
  overflow: hidden;
  white-space: nowrap;
  text-align: left;
  font: 700 14px/20px 'Liberation Sans', Arial, sans-serif;
  background: #fbfbfc;
  border-right: 1px solid #e3e5e8;
  border-bottom: 1px solid #d0d3d8;
`;

const QName = styled.th<{ $active?: boolean; $slim?: boolean }>`
  height: ${(p) => (p.$slim ? 9 : 26)}px;
  padding: 0;
  overflow: hidden;
  white-space: nowrap;
  text-align: left;
  font: 400 14px/20px 'Liberation Sans', Arial, sans-serif;
  -webkit-text-stroke: 0.3px #101010;
  background: ${(p) => (p.$active ? 'linear-gradient(#e0f4ff, #dcf2ff 30%, #b4e0fb 35%, #bfe6fd)' : 'linear-gradient(#ffffff 40%, #eef0f2)')};
  border-right: 1px solid #fff;
  border-bottom: 1px solid #c9ccd1;
`;

const QCell = styled.td<{ $bg: string; $slim?: boolean }>`
  height: ${(p) => (p.$slim ? 9 : 26)}px;
  padding: 0 6px 0 0;
  overflow: hidden;
  white-space: nowrap;
  text-align: right;
  font: 13px/20px 'Liberation Sans', Arial, sans-serif;
  background: ${(p) => p.$bg};
  border-right: 1px solid rgba(255, 255, 255, 0.75);
`;

const ROWS: [string, string, string, string, string][] = [
  ['SBRF-3.', '1,66', '10 465', '171', '#dff4d3'],
  ['GAZR-3.', '0,54', '13 867', '75', 'linear-gradient(#8f6a68 0, #f0a09c 2px, #d8605f 25px, #8f6a68)'],
  ['RTS-3.1', '0,72', '78 430', '560', '#fce9ac'],
  ['BR-1.16', '-1,86', '38,04', '-0,72', '#fd6560'],
  ['ED-3.16', '-0,14', '1,0954', '-0,0015', '#fce9ac'],
  ['LKOH-3.', '-0,37', '24 416', '-90', '#fdd2d1'],
  ['GOLD-3.', '0,30', '1 068,5', '3,2', '#ffffff'],
];

function QuotesTable() {
  return (
    <QuotesBody>
      <QuotesPane>
        <Quotes>
          <colgroup>
            <Col $w={29} />
            <Col $w={19} />
            <Col $w={26} />
            <Col $w={26} />
          </colgroup>
          <thead>
            <tr>
              <QHead scope="col" aria-label="Инструмент" />
              <QHead scope="col">% из</QHead>
              <QHead scope="col">Цена г</QHead>
              <QHead scope="col">Измен</QHead>
            </tr>
          </thead>
          <tbody>
            <tr>
              <QName $slim as="td" />
              <QCell $slim $bg="#8cdc5f" />
              <QCell $slim $bg="#8cdc5f" />
              <QCell $slim $bg="#8cdc5f" />
            </tr>
            {ROWS.map(([name, pct, last, diff, bg]) => (
              <tr key={name}>
                <QName scope="row" $active={name === 'GAZR-3.'}>{name}</QName>
                <QCell $bg={bg}>{pct}</QCell>
                <QCell $bg={bg}>{last}</QCell>
                <QCell $bg={bg}>{diff}</QCell>
              </tr>
            ))}
          </tbody>
        </Quotes>
      </QuotesPane>
      <VBar $width={17}>
        <Arrow d={UP} label="Вверх" w={17} h={17} />
        <Spacer />
        <VThumb />
        <Spacer $h={2} />
        <Arrow d={DOWN} label="Вниз" w={17} h={15} />
      </VBar>
    </QuotesBody>
  );
}

export default function App() {
  return (
    <>
      <GlobalStyle />
      <Desktop>
        <WindowRows>
          <WindowRow $columns="minmax(0, 1111fr) minmax(0, 779fr)">
            <Win title="Графики [GAZR-3.16] #4" period="5 минут" titleHeight={17} left={0} right={7}>
              <Chart5 />
              <HScroll before={997} thumb={71} after={2} />
            </Win>
            <Win title="Графики [GAZR-3.16] #3" period="60 минут" titleHeight={21} left={7} right={6}>
              <Chart60 />
              <HScroll before={558} thumb={171} after={3} />
            </Win>
          </WindowRow>
          <WindowRow $grow $columns="minmax(0, 221fr) minmax(0, 555fr) minmax(0, 513fr) minmax(0, 601fr)">
            <Win title="Текущая табли..." titleHeight={24} left={0} right={6} last table>
              <QuotesTable />
            </Win>
            <Win title="Графики [SBRF-3.16] #5" period="15 минут" titleHeight={28} left={4} right={7} last>
              <ChartSbrf />
              <HScroll before={492} thumb={16} after={2} grip={false} />
            </Win>
            <Win title="Графики [GAZR-3.16]" period="Дневной" titleHeight={29} left={6} right={6} last>
              <ChartAtr />
              <HScroll before={114} thumb={351} after={2} />
            </Win>
            <Win title="Графики [GAZR-3.16] #2" period="Дневной" titleHeight={29} left={8} right={6} last>
              <ChartPrice />
            </Win>
          </WindowRow>
        </WindowRows>
        <VBar $width={16}>
          <Spacer $h={13} />
          <VThumb $grow><Grip $vertical /><Grip $vertical /><Grip $vertical /></VThumb>
          <Spacer $h={7} />
        </VBar>
      </Desktop>
    </>
  );
}
